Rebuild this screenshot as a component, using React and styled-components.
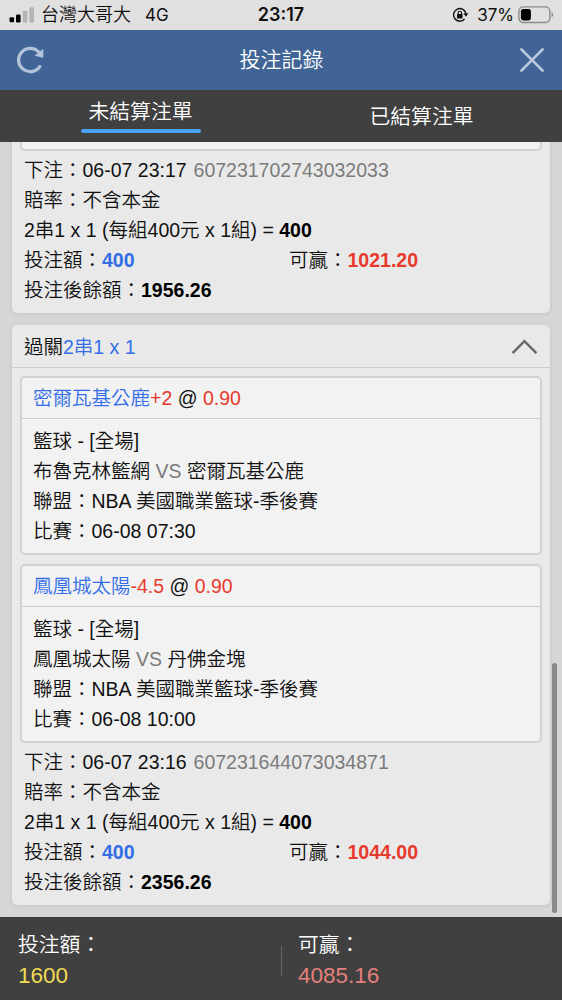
import React from 'react'
import styled, { createGlobalStyle } from 'styled-components';


const bets = [
    {
        id: '607231702743032033',
        placed: '06-07 23:17',
        stake: '400',
        win: '1021.20',
        balance: '1956.26',
        games: [],
    },
    {
        id: '607231644073034871',
        placed: '06-07 23:16',
        stake: '400',
        win: '1044.00',
        balance: '2356.26',
        games: [
            { pick: '密爾瓦基公鹿', line: '+2', odds: '0.90', teams: ['布魯克林籃網', '密爾瓦基公鹿'], time: '06-08 07:30' },
            { pick: '鳳凰城太陽', line: '-4.5', odds: '0.90', teams: ['鳳凰城太陽', '丹佛金塊'], time: '06-08 10:00' },
        ],
    },
]

function StatusBar() {
    return (
        <Status>
            <Carrier>
                <svg width="26" height="18" viewBox="0 0 26 18">
                    <rect x="0.5" y="11.3" width="4.6" height="5" rx="1.2" fill="#000" />
                    <rect x="7" y="8.6" width="4.6" height="7.8" rx="1.2" fill="#000" />
                    <rect x="13.8" y="4.8" width="4.6" height="11.6" rx="1.2" fill="#b4b4b4" />
                    <rect x="20.4" y="1.2" width="4.6" height="15.2" rx="1.2" fill="#b4b4b4" />
                </svg>
                <CarrierName>台灣大哥大</CarrierName>
                <Network>4G</Network>
            </Carrier>
            <Clock>23:17</Clock>
            <Power>
                <svg width="17" height="16" viewBox="0 0 17 16">
                    <path d="M13.9 6.2A6.3 6.3 0 1 0 12.6 12" fill="none" stroke="#111" strokeWidth="1.4" />
                    <path d="M11.3 6.3h5l-2.3 3.4z" fill="#111" />
                    <rect x="5" y="7" width="5.6" height="4.4" rx="0.6" fill="#111" />
                    <path d="M6.1 7.4V6a1.7 1.7 0 0 1 3.4 0v1.4" fill="none" stroke="#111" strokeWidth="1.1" />
                </svg>
                <Percent>37%</Percent>
                <svg width="36" height="18" viewBox="0 0 36 18">
                    <rect x="0.9" y="0.9" width="31" height="15.6" rx="4.4" fill="none" stroke="#8b8b8b" strokeWidth="1.4" />
                    <rect x="2.9" y="2.9" width="10" height="11.6" rx="2.4" fill="#000" />
                    <path d="M33.6 6.3c2 .8 2 4.2 0 5z" fill="#8b8b8b" />
                </svg>
            </Power>
        </Status>
    )
}

function Game({ game }) {
    return (
        <GameBox>
            <GameHead>
                <Blue>{game.pick}</Blue><Red>{game.line}</Red> @ <Red>{game.odds}</Red>
            </GameHead>
            <GameBody>
                <Line>籃球 - [全場]</Line>
                <Line>{game.teams[0]} <Gray>VS</Gray> {game.teams[1]}</Line>
                <Line>聯盟：NBA 美國職業籃球-季後賽</Line>
                <Line>比賽：{game.time}</Line>
            </GameBody>
        </GameBox>
    )
}

function Bet({ bet }) {
    return (
        <Card>
            {bet.games.length > 0 && (
                <CardHead>
                    <span>過關<Blue>2串1 x 1</Blue></span>
                    <svg width="27" height="16" viewBox="0 0 27 16">
                        <path d="M1.6 14.2L13.5 2.2L25.4 14.2" fill="none" stroke="#666" strokeWidth="2.4" />
                    </svg>
                </CardHead>
            )}
            <Games>
                {bet.games.map((game) => <Game key={game.pick} game={game} />)}
                {bet.games.length === 0 && <EmptyBox />}
            </Games>
            <Summary>
                <Line>下注：{bet.placed} <BetId>{bet.id}</BetId></Line>
                <Line>賠率：不含本金</Line>
                <Line>2串1 x 1 (每組400元 x 1組) = <Bold>{bet.stake}</Bold></Line>
                <Columns>
                    <Line>投注額：<Bold $color="#336ee8">{bet.stake}</Bold></Line>
                    <Line>可贏：<Bold $color="#e73a2d">{bet.win}</Bold></Line>
                </Columns>
                <Line>投注後餘額：<Bold>{bet.balance}</Bold></Line>
            </Summary>
        </Card>
    )
}

function App() {
    return (
        <Screen>
            <GlobalStyle />
            <StatusBar />
            <Header>
                <svg width="28" height="28" viewBox="0 0 28 28">
                    <path d="M22.8 6.2A11.6 11.6 0 1 0 23.8 20.6" fill="none" stroke="#b3c3da" strokeWidth="3.3" strokeLinecap="round" />
                    <path d="M27.3 2.8v8.9l-8.8-2z" fill="#b3c3da" />
                </svg>
                <Title>投注記錄</Title>
                <svg width="26" height="26" viewBox="0 0 26 26">
                    <path d="M2.4 2.4L23.6 23.6M23.6 2.4L2.4 23.6" stroke="#bccbdf" strokeWidth="2.7" strokeLinecap="round" />
                </svg>
            </Header>
            <Tabs>
                <Tab $active>未結算注單</Tab>
                <Tab>已結算注單</Tab>
            </Tabs>
            <List>
                {bets.map((bet) => <Bet key={bet.id} bet={bet} />)}
                <ScrollThumb />
            </List>
            <Footer>
                <Total>
                    <span>投注額：</span>
                    <Amount $color="#f2dc55">1600</Amount>
                </Total>
                <Divider />
                <Total>
                    <span>可贏：</span>
                    <Amount $color="#e57f7d">4085.16</Amount>
                </Total>
            </Footer>
        </Screen>
    )
}

export default App

const GlobalStyle = createGlobalStyle`
    * {
        box-sizing: border-box;
    }
    body {
        margin: 0;
        background-color: #d6d6d6;
    }
    svg {
        display: block;
        flex-shrink: 0;
    }
`
const Screen = styled.div`
    display: flex;
    flex-direction: column;
    height: 1000px;
    overflow: hidden;
    color: #111;
    font-family: "Liberation Sans", "Noto Sans CJK TC", sans-serif;
    font-size: 19.5px;
    font-weight: 350;
    line-height: 30px;
    white-space: nowrap;
`
const Status = styled.div`
    display: grid;
    grid-template-columns: 1fr auto 1fr;
    align-items: center;
    height: 30px;
    padding: 0 8px 0 9px;
    background-color: #e0e0e0;
    font-family: Inter, "Noto Sans CJK TC", sans-serif;
    font-size: 17px;
    line-height: 28px;
`
const Carrier = styled.div`
    display: flex;
    align-items: center;
`
const CarrierName = styled.span`
    margin-left: 6px;
    font-size: 18px;
`
const Network = styled.span`
    margin-left: 14px;
    font-weight: 400;
`
const Clock = styled.div`
    margin-left: -1px;
    font-weight: 600;
    font-size: 18px;
`
const Power = styled.div`
    display: flex;
    align-items: center;
    justify-content: flex-end;
`
const Percent = styled.span`
    margin: 0 4px 0 8px;
    font-weight: 400;
`
const Header = styled.header`
    display: flex;
    align-items: center;
    justify-content: space-between;
    height: 60px;
    padding: 0 17px 0 16px;
    background-color: #406496;
`
const Title = styled.div`
    color: white;
    font-size: 21px;
`
const Tabs = styled.div`
    display: grid;
    grid-template-columns: 1fr 1fr;
    height: 52px;
    background-color: #404040;
`
const Tab = styled.div`
    justify-self: center;
    padding: ${(props) => (props.$active ? '7px 8px 0' : '12px 0 0')};
    color: white;
    font-size: 20.8px;

    &::after {
        content: '';
        display: ${(props) => (props.$active ? 'block' : 'none')};
        height: 4px;
        margin: 2px -8px 0;
        border-radius: 2px;
        width: 120px;
        background-color: #48a4f6;
    }
`
const List = styled.main`
    position: relative;
    display: flex;
    flex-direction: column;
    justify-content: flex-end;
    gap: 12px;
    height: 775px;
    padding: 0 12px 12px;
    overflow: hidden;
    background-color: #d6d6d6;
`
const Card = styled.section`
    flex-shrink: 0;
    border-radius: 5px;
    background-color: #e9e9e9;
    box-shadow: 0 1px 5px rgba(0, 0, 0, 0.09);
`
const CardHead = styled.div`
    display: flex;
    align-items: center;
    justify-content: space-between;
    height: 43px;
    padding: 2px 12px 0;
    border-bottom: 1px solid #cbcbcb;
`
const Games = styled.div`
    display: flex;
    flex-direction: column;
    gap: 9px;
    padding: 8px 8px 0;
`
const GameBox = styled.div`
    border: 2px solid #d2d2d2;
    border-radius: 5px;
    background-color: #f2f2f2;
`
const EmptyBox = styled(GameBox)`
    height: 40px;
`
const GameHead = styled.div`
    height: 41px;
    padding: 5px 11px;
    border-bottom: 1px solid #cbcbcb;
`
const GameBody = styled.div`
    padding: 7px 11px 7px;
`
const Summary = styled.div`
    padding: 4px 12px 8px;
`
const Line = styled.div`
    height: 30px;
`
const Columns = styled.div`
    display: grid;
    grid-template-columns: 265px 1fr;
`
const Blue = styled.span`
    color: #336ee8;
`
const Red = styled.span`
    color: #e73a2d;
`
const Gray = styled.span`
    color: #7b7b7b;
`
const BetId = styled(Gray)`
    margin-left: 1.5px;
`
const Bold = styled.b`
    color: ${(props) => props.$color || '#000'};
    font-weight: 700;
`
const ScrollThumb = styled.div`
    position: absolute;
    right: 5px;
    bottom: 4px;
    width: 5px;
    height: 250px;
    border-radius: 3px;
    background-color: #8a8a8a;
`
const Footer = styled.footer`
    display: grid;
    grid-template-columns: 263px 1px 1fr;
    align-items: center;
    height: 83px;
    padding: 4px 18px 0;
    background-color: #404040;
    color: white;
    font-size: 20.8px;
`
const Total = styled.div`
    display: flex;
    flex-direction: column;
`
const Divider = styled.div`
    height: 30px;
    background-color: #666;

    & + div {
        padding-left: 16px;
    }
`
const Amount = styled.span`
    color: ${(props) => props.$color};
    font-size: 22.5px;
    line-height: 32px;
`
